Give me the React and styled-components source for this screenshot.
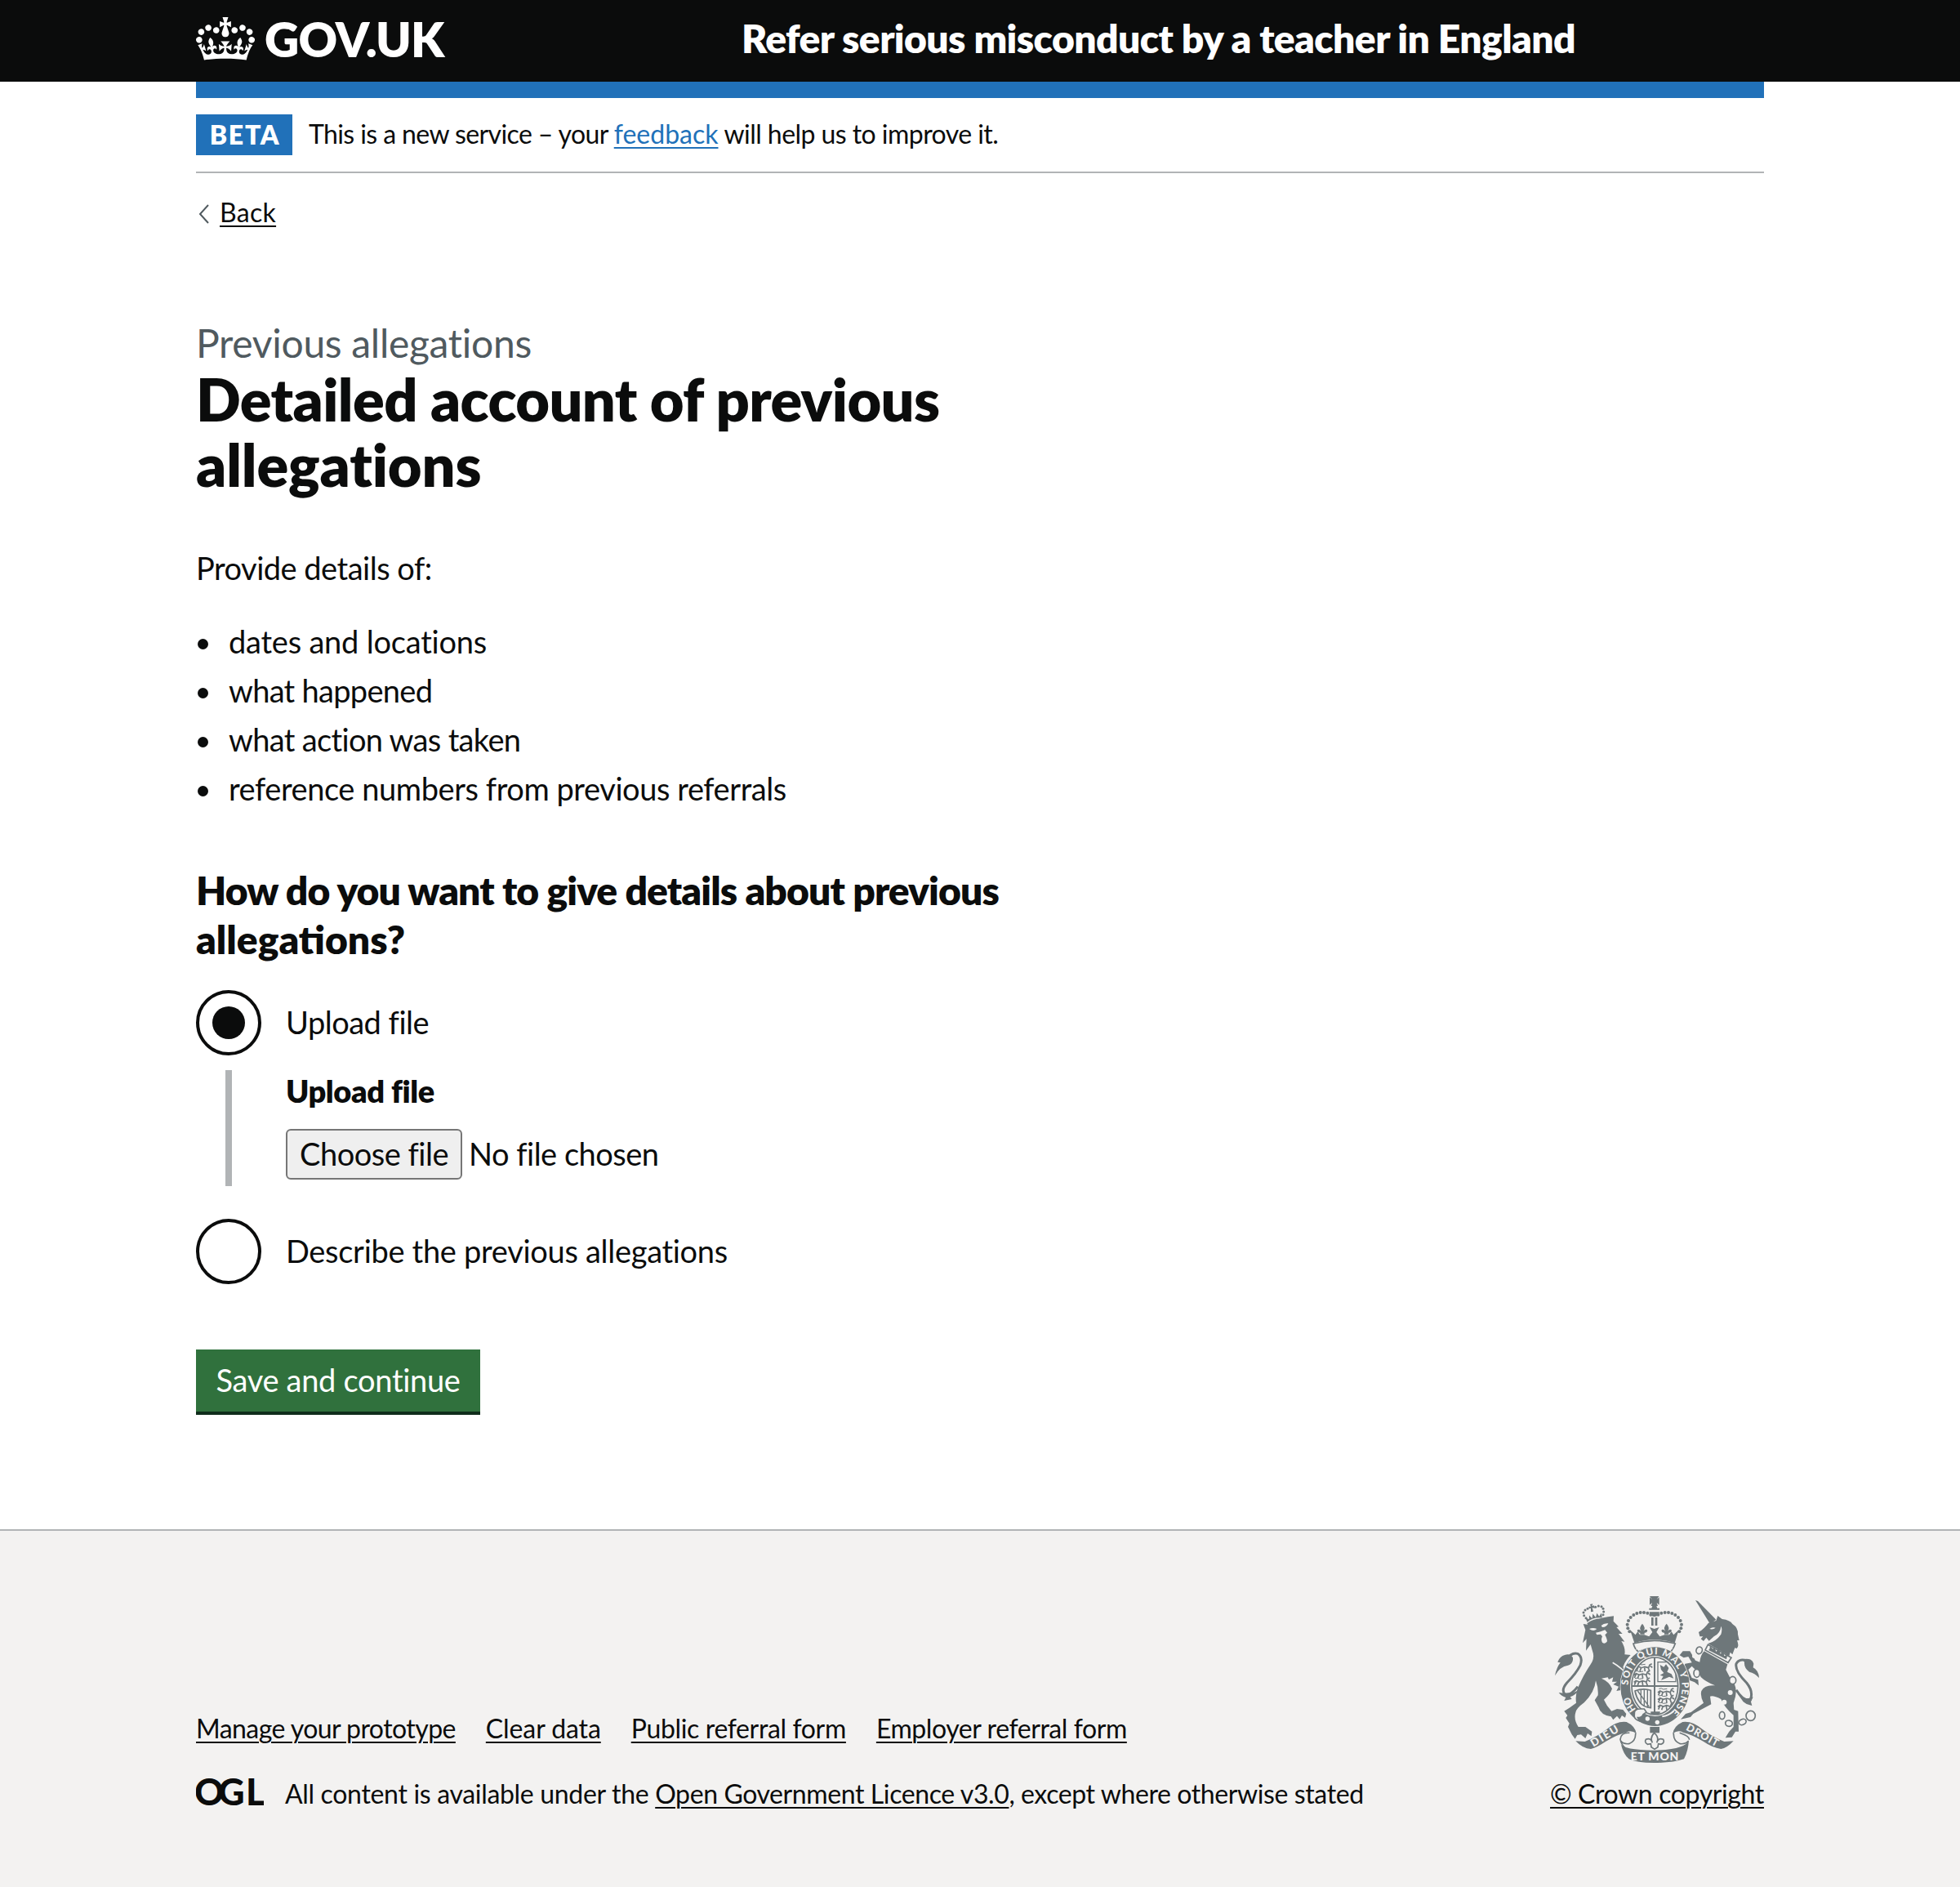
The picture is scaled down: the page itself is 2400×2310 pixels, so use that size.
import React from 'react';
import styled, { createGlobalStyle } from 'styled-components';

const ink = '#0b0c0c';
const blue = '#2171b9';
const grey = '#b1b4b6';
const paper = '#f3f2f1';
const crest = '#6e777a';

const Global = createGlobalStyle`
  *, *::before, *::after { box-sizing: border-box; }
  body {
    margin: 0;
    background: #fff;
    color: ${ink};
    font-family: Lato, "Liberation Sans", sans-serif;
    font-kerning: normal;
  }
`;

const Page = styled.div`
  min-height: 2310px;
  display: flex;
  flex-direction: column;
`;

const Container = styled.div`
  width: 1920px;
  margin: 0 auto;
`;

const Header = styled.header`
  height: 100px;
  background: ${ink};
  color: #fff;
`;

const HeaderRow = styled(Container)`
  height: 100px;
  display: grid;
  grid-template-columns: 668px 1fr;
`;

const LogoLink = styled.a`
  display: flex;
  align-items: flex-start;
  gap: 12px;
  padding-top: 21px;
  color: inherit;
  text-decoration: none;
`;

const Crown = styled.svg`
  width: 72px;
  height: 53px;
  fill: currentColor;
`;

const LogoText = styled.span`
  font-size: 58.5px;
  font-weight: 800;
  line-height: 60px;
  margin-top: -4px;
  letter-spacing: ${p => p.$ls}px;
`;

const ServiceName = styled.span`
  padding-top: 17px;
  font-size: 48px;
  font-weight: 800;
  line-height: 60px;
  white-space: nowrap;
  letter-spacing: ${p => p.$ls}px;
`;

const BlueBar = styled.div`
  height: 20px;
  background: ${blue};
`;

const PhaseBanner = styled.div`
  height: 92px;
  padding-top: 20px;
  display: flex;
  align-items: flex-start;
  gap: 20px;
  border-bottom: 2px solid ${grey};
`;

const Tag = styled.strong`
  width: 118px;
  height: 50px;
  padding-left: 2px;
  background: ${blue};
  color: #fff;
  font-size: 32px;
  font-weight: 800;
  line-height: 49px;
  text-align: center;
  letter-spacing: 1.7px;
`;

const Text = styled.span`
  letter-spacing: ${p => p.$ls || 0}px;
`;

const SmallText = styled.p`
  margin: ${p => p.$top || 0}px 0 0;
  font-size: 32px;
  line-height: 40px;
  white-space: pre;
`;

const Link = styled.a`
  color: ${p => p.$color || ink};
  text-decoration: underline;
  text-decoration-thickness: 2px;
  text-underline-offset: 4px;
  letter-spacing: ${p => p.$ls || 0}px;
`;

const BackRow = styled.div`
  display: flex;
  align-items: center;
  gap: 13px;
  margin-top: 28px;
  padding-left: 3px;
  font-size: 32px;
  line-height: 40px;
`;

const Chevron = styled.svg`
  width: 13px;
  height: 24px;
  margin-top: 3px;
  fill: none;
  stroke: #505a5f;
  stroke-width: 2;
`;

const Main = styled.main`
  width: 1060px;
  padding-top: 110px;
`;

const Caption = styled.span`
  display: block;
  color: #505a5f;
  font-size: 48px;
  line-height: 60px;
  letter-spacing: ${p => p.$ls}px;
`;

const Title = styled.h1`
  margin: -2px 0 62px;
  font-size: 72px;
  font-weight: 800;
  line-height: 80px;
`;

const Line = styled.span`
  display: block;
  white-space: nowrap;
  letter-spacing: ${p => p.$ls}px;
`;

const Body = styled.p`
  margin: 0 0 40px;
  font-size: 38px;
  line-height: 50px;
  letter-spacing: ${p => p.$ls}px;
`;

const List = styled.ul`
  margin: 0 0 70px;
  padding: 0;
  list-style: none;
  display: flex;
  flex-direction: column;
  gap: 10px;
`;

const Item = styled.li`
  display: flex;
  align-items: center;
  gap: 25px;
  padding-left: 2px;
  font-size: 38px;
  line-height: 50px;
  letter-spacing: ${p => p.$ls}px;

  &::before {
    content: "";
    width: 13px;
    height: 13px;
    margin-top: 6px;
    border-radius: 50%;
    background: ${ink};
  }
`;

const Legend = styled.h2`
  margin: 0 0 32px;
  font-size: 48px;
  font-weight: 800;
  line-height: 60px;
`;

const RadioRow = styled.label`
  display: flex;
  align-items: center;
  gap: 30px;
  height: 80px;
  font-size: 38px;
  line-height: 50px;
`;

const RadioRing = styled.span`
  width: 80px;
  height: 80px;
  display: grid;
  place-items: center;
  border: 4px solid ${ink};
  border-radius: 50%;
`;

const RadioDot = styled.span`
  width: 40px;
  height: 40px;
  border-radius: 50%;
  background: ${ink};
`;

const RadioLabel = styled.span`
  margin-top: -2px;
  letter-spacing: ${p => p.$ls}px;
`;

const Conditional = styled.div`
  height: 142px;
  margin: 20px 0 40px 36px;
  padding-left: 66px;
  border-left: 8px solid ${grey};
`;

const FileLabel = styled.div`
  margin-top: -2px;
  font-size: 38px;
  font-weight: 800;
  line-height: 50px;
  letter-spacing: ${p => p.$ls}px;
`;

const FileRow = styled.div`
  display: flex;
  align-items: center;
  gap: 8px;
  margin-top: 22px;
  font-size: 38px;
  line-height: 50px;
`;

const ChooseButton = styled.button`
  width: 216px;
  height: 62px;
  padding: 0 0 2px;
  border: 2px solid #767676;
  border-radius: 6px;
  background: #efefef;
  color: ${ink};
  font: inherit;
  letter-spacing: ${p => p.$ls}px;
  white-space: nowrap;
`;

const NoFile = styled.span`
  margin-top: -2px;
  letter-spacing: ${p => p.$ls}px;
`;

const SaveButton = styled.button`
  display: block;
  width: 348px;
  height: 80px;
  margin-top: 80px;
  padding: 0 0 2px;
  border: 0;
  border-bottom: 4px solid #102d1b;
  background: #30713d;
  color: #fff;
  font: inherit;
  font-size: 38px;
  line-height: 50px;
  letter-spacing: ${p => p.$ls}px;
  white-space: nowrap;
`;

const Footer = styled.footer`
  flex: 1;
  margin-top: 140px;
  border-top: 2px solid ${grey};
  background: ${paper};
`;

const FooterRow = styled(Container)`
  display: flex;
  justify-content: space-between;
  align-items: flex-end;
  padding-top: 80px;
`;

const FooterNav = styled.nav`
  display: flex;
  gap: 37px;
  margin-bottom: 40px;
  font-size: 32px;
  line-height: 40px;
  white-space: nowrap;
`;

const Licence = styled.div`
  display: flex;
  align-items: flex-start;
  gap: 26px;
`;

const OglLogo = styled.svg`
  width: 83px;
  height: 40px;
  fill: ${ink};
  font: 900 45px Lato, sans-serif;
`;

const Copyright = styled.div`
  width: 262px;
  display: flex;
  flex-direction: column;
  align-items: center;
  gap: 18px;
  font-size: 32px;
  line-height: 40px;
  white-space: nowrap;
`;

const Arms = styled.svg`
  width: 250px;
  height: 204px;
  fill: ${crest};
  font-family: Lato, sans-serif;
  font-weight: 900;
`;

const CrownMark = () => (
  <Crown viewBox="0 0 132 97" aria-hidden="true">
    <path
      fillRule="evenodd"
      d="M25 30.2c3.5 1.5 7.7-.2 9.1-3.7 1.5-3.6-.2-7.8-3.9-9.2-3.6-1.4-7.6.3-9.1 3.9-1.4 3.5.3 7.5 3.9 9zM9 39.5c3.6 1.5 7.8-.2 9.2-3.7 1.5-3.6-.2-7.8-3.9-9.1-3.6-1.5-7.6.2-9.1 3.8-1.4 3.5.3 7.5 3.8 9zM4.4 57.2c3.5 1.5 7.7-.2 9.1-3.8 1.5-3.6-.2-7.7-3.9-9.1-3.5-1.5-7.6.3-9.1 3.8-1.4 3.5.3 7.6 3.9 9.1zm38.3-21.4c3.5 1.5 7.7-.2 9.1-3.8 1.5-3.6-.2-7.7-3.9-9.1-3.6-1.5-7.6.3-9.1 3.8-1.3 3.6.4 7.7 3.9 9.1zm64.4-5.6c-3.6 1.5-7.8-.2-9.1-3.7-1.5-3.6.2-7.8 3.8-9.2 3.6-1.4 7.7.3 9.2 3.9 1.3 3.5-.4 7.5-3.9 9zm15.9 9.3c-3.6 1.5-7.7-.2-9.1-3.7-1.5-3.6.2-7.8 3.7-9.1 3.6-1.5 7.7.2 9.2 3.8 1.5 3.5-.3 7.5-3.8 9zm4.7 17.7c-3.6 1.5-7.8-.2-9.2-3.8-1.5-3.6.2-7.7 3.9-9.1 3.6-1.5 7.7.3 9.2 3.8 1.3 3.5-.4 7.6-3.9 9.1zM89.3 35.8c-3.6 1.5-7.8-.2-9.2-3.8-1.4-3.6.2-7.7 3.9-9.1 3.6-1.5 7.7.3 9.2 3.8 1.4 3.6-.3 7.7-3.9 9.1zM69.7 17.7l8.9 4.7V9.3l-8.9 2.8c-.2-.3-.5-.6-.9-.9L72.4 0H59.6l3.5 11.2c-.3.3-.6.5-.9.9l-8.8-2.8v13.1l8.8-4.7c.3.3.6.7.9.9l-5 15.4v.1c-.2.8-.4 1.6-.4 2.4 0 4.1 3.1 7.5 7 8.1h.2c.3 0 .7.1 1 .1.4 0 .7 0 1-.1h.2c4-.6 7.1-4.1 7.1-8.1 0-.8-.1-1.7-.4-2.4V34l-5.1-15.4c.4-.2.7-.6 1-.9zM66 92.8c16.9 0 32.8 1.1 47.1 3.2 4-16.9 8.9-26.7 14-33.5l-9.6-3.4c1 4.9 1.1 7.2 0 10.2-1.5-1.4-3-4.3-4.2-8.7L108.6 76c2.8-2 5-3.2 7.5-3.3-4.4 9.4-10 11.9-13.6 11.2-4.3-.8-6.3-4.6-5.6-7.9 1-4.7 5.7-5.9 8-.5 4.3-8.7-3-11.4-7.6-8.8 7.1-7.2 7.9-13.5 2.1-21.1-8 6.1-8.1 12.3-4.5 20.8-4.7-5.4-12.1-2.5-9.5 6.2 3.4-5.2 7.9-2 7.2 3.1-.6 4.3-6.4 7.8-13.5 7.2-10.3-.9-10.9-8-11.2-13.8 2.5-.5 7.1 1.8 11 7.3L80.2 60c-4.1 4.4-8 5.3-12.3 5.4 1.4-4.4 8-11.6 8-11.6H55.5s6.4 7.2 7.9 11.6c-4.2-.1-8-1-12.3-5.4l1.4 16.4c3.9-5.5 8.5-7.7 10.9-7.3-.3 5.8-.9 12.8-11.1 13.8-7.2.6-12.9-2.9-13.5-7.2-.7-5 3.8-8.3 7.1-3.1 2.7-8.7-4.6-11.6-9.4-6.2 3.7-8.5 3.6-14.7-4.6-20.8-5.8 7.6-5 13.9 2.2 21.1-4.7-2.6-11.9.1-7.7 8.8 2.3-5.5 7.1-4.2 8.1.5.7 3.3-1.3 7.1-5.7 7.9-3.5.7-9-1.8-13.5-11.2 2.5.1 4.7 1.3 7.5 3.3l-4.7-15.4c-1.2 4.4-2.7 7.2-4.3 8.7-1.1-3-.9-5.3 0-10.2l-9.5 3.4c5 6.9 9.9 16.7 14 33.5 14.8-2.1 30.8-3.2 47.7-3.2z"
    />
  </Crown>
);

// Beads of the imperial crown's left arch; the right arch mirrors them.
const beads = [[424, 116], [412, 110], [399, 108], [386, 108], [373, 111], [361, 117], [350, 126], [342, 138], [338, 152], [340, 166], [346, 178]];
const lionBeads = [[186, 128], [179, 119], [177, 108], [183, 99], [192, 94], [221, 88], [232, 84], [243, 86], [249, 94], [251, 105], [249, 116]];
const links = [[602, 247, 11, 13, 20], [593, 331, 11, 15, 0], [725, 357, 12, 14, 0], [686, 486, 10, 14, 0], [711, 515, 13, 11, 10], [761, 510, 14, 10, -25], [791, 487, 17, 18, 0]];

const Fleur = ({ x, y }) => (
  <path transform={`translate(${x} ${y})`} d="M0-21Q14-6 4 6Q14-4 19 4Q17 14 8 12L8 18H-8V12Q-17 14-19 4Q-14-4-4 6Q-14-6 0-21Z" />
);

// Three passant lions, as in the first and fourth quarters of the shield.
const Passant = ({ x, y }) => (
  <g transform={`translate(${x} ${y})`} fill="none" stroke={crest} strokeWidth="5">
    <path d="M0 8L8 2L20 7L32 3L46 7L50-4L58-8M8 4L2 18M18 8L14 20M31 6L33 20M45 8L50 20M52 0L60 6" />
    <path strokeWidth="3" d="M4-6Q14-10 20-4L34-6" />
  </g>
);

const RoyalArms = () => (
  <Arms viewBox="72 48 750 612" aria-hidden="true">
    <defs>
      <path id="garter" d="M440 498A99 118 0 0 1 440 262A99 118 0 0 1 440 498" />
      <clipPath id="shield"><ellipse cx="439" cy="378" rx="84" ry="104" /></clipPath>
    </defs>

    {/* lion */}
    <path d="M176 150L192 152Q228 130 266 124L288 121L287 140L306 160L298 162L320 186L306 186L328 215L316 213Q332 238 328 262L350 264Q330 285 322 308L335 335Q350 365 345 395L340 405L330 398L316 410L318 392L298 396L306 380L286 372L300 362L282 362L286 346L270 354L266 346L243 350Q272 362 282 388Q276 408 252 428Q262 452 280 470L300 462L322 465L334 480L330 494L318 486L310 500L300 488L286 502L278 490Q240 484 232 455L218 430L230 412Q232 385 222 358Q218 400 180 438Q150 460 148 475Q140 500 158 528L184 528L208 545L206 562L192 552L184 570L168 556L154 558L146 572L134 556L120 528L125 515L112 495L118 486L106 470L125 458L150 440Q146 410 156 385Q178 335 202 300Q220 275 210 250L203 225L186 248L188 205L174 220L184 172Z" />
    <g fill={paper}>
      <path d="M198 168Q212 162 226 168Q214 180 198 168ZM242 156Q252 146 268 148Q262 162 246 162Z" />
      <path d="M222 182L240 178L256 172L264 182L256 190Q264 206 264 214Q256 226 246 218Q240 208 246 196L240 188L226 190Z" />
    </g>
    <path d="M284 292Q312 308 350 346" fill="none" stroke={paper} strokeWidth="5" />
    <g transform="rotate(-16 215 130)">
      <path d="M186 140Q215 128 247 140L246 150Q215 140 188 150Z" />
      <path d="M188 136L186 118L197 128L202 114L209 128L216 112L223 128L231 114L236 128L247 118L245 136Q215 124 188 136Z" />
    </g>
    {lionBeads.map(([x, y]) => <circle key={`${x}-${y}`} cx={x} cy={y} r="4.5" />)}
    <path d="M201 78L211 76L208 84L216 82L218 92L209 90L213 104L204 106L204 92L197 94L196 86L204 86Z" />
    <path d="M112 284Q132 253 155 259Q176 272 165 302Q150 332 116 366Q94 392 108 408Q128 416 156 380" fill="none" stroke={crest} strokeWidth="9" />
    <path d="M72 340Q78 310 92 292L82 290Q90 268 108 264Q128 256 138 274Q140 296 120 302Q90 306 72 340Z" />
    <path d="M86 402L104 404L140 402L158 394Q148 412 128 418L134 426L106 432L112 420Q96 416 86 402Z" />

    {/* unicorn */}
    <path d="M588 63L597 66L664 134L642 150Z" />
    <path d="M600 180Q620 168 636 146L664 138L670 120L686 132Q716 136 724 150Q746 164 744 188L749 210L741 211Q750 232 740 240L733 238L724 262L716 254L712 268L634 222Q664 214 682 188Q688 168 682 158Q680 184 656 196L638 212L628 200L618 213L608 205L616 196L604 196Z" />
    <path d="M640 168Q650 160 662 164Q652 172 640 168Z" fill={paper} />
    <path d="M634 226L720 274L708 292L624 246Z" fill={paper} stroke={crest} strokeWidth="5" />
    <path d="M640 242L642 230L652 242L658 234L664 252L674 240L680 260L690 250L694 268L706 262L702 280L636 246Z" />
    <path d="M620 250L706 298L700 318Q712 345 732 372Q744 400 728 440L730 465L745 470L747 545L735 545L722 566L698 568L712 545L728 528L728 485Q694 456 682 426Q655 412 642 416L646 445L580 480L570 492L534 500L552 480L572 474L618 440Q605 415 610 396Q622 372 660 376Q625 362 608 345L600 330L575 305L562 318L575 348L598 355L600 376L585 364L565 356L555 325L543 315L550 296L575 292L562 270L545 274L530 265L542 250L568 250L588 284L604 290Q606 266 620 250Z" />
    {links.map(([x, y, rx, ry, a]) => (
      <ellipse key={`${x}-${y}`} cx={x} cy={y} rx={rx} ry={ry} transform={`rotate(${a} ${x} ${y})`} fill={paper} stroke={crest} strokeWidth="5" />
    ))}
    <g fill={paper}><circle cx="716" cy="402" r="9" /><circle cx="694" cy="437" r="9" /><circle cx="584" cy="268" r="8" /></g>
    <path d="M738 392Q764 434 790 428Q802 398 776 366Q732 322 738 296Q748 276 776 284" fill="none" stroke={crest} strokeWidth="9" />
    <path d="M760 280Q796 272 802 296L800 310Q820 320 822 348Q806 330 786 326Q766 312 768 290Z" />
    <path d="M744 408Q764 428 788 422L800 418L792 436L796 450L776 444L764 436Z" />

    {/* crown */}
    <path d="M420 48H454L446 60L455 52V80L446 72L450 84H425L429 72L420 80V52L429 60Z" />
    <path d="M430 84H445L448 92H456V98H418V92H427Z" />
    <path d="M419 106H456Q454 122 437 124Q421 122 419 106Z" />
    <path d="M426 126H434V156H426ZM440 126H448V156H440Z" />
    {beads.map(([x, y]) => (
      <g key={x}><circle cx={x} cy={y} r="6" /><circle cx={875 - x} cy={y} r="6" /></g>
    ))}
    <path d="M348 172L368 190L376 178L384 190H400L418 196L430 180L420 162L437 168L455 162L445 180L457 196L475 190H492L500 178L508 190L527 172L512 220Q437 196 364 220Z" />
    <Fleur x={393} y={170} />
    <Fleur x={482} y={170} />
    <path d="M360 222Q437 200 514 222Q510 236 498 252Q437 226 378 252Q364 240 360 222Z" fill={paper} stroke={crest} strokeWidth="5" />

    {/* garter and shield */}
    <ellipse cx="440" cy="380" rx="129" ry="147" fill={paper} />
    <path fillRule="evenodd" d="M313 380A127 145 0 1 1 567 380A127 145 0 1 1 313 380ZM348 378A91 111 0 1 0 530 378A91 111 0 1 0 348 378Z" />
    <path d="M372 240Q437 222 502 240L508 244Q437 216 366 246Z" fill={paper} />
    <g fill={paper} fontSize="35">
      <text><textPath href="#garter" startOffset="80" textLength="54">HO</textPath></text>
      <text><textPath href="#garter" startOffset="176" textLength="440">SOIT QUI MAL Y PENSE</textPath></text>
    </g>
    <ellipse cx="439" cy="378" rx="85" ry="105" fill={paper} stroke={crest} strokeWidth="5" />
    <g clipPath="url(#shield)">
      <Passant x={370} y={304} />
      <Passant x={362} y={330} />
      <Passant x={362} y={356} />
      <Passant x={450} y={394} />
      <Passant x={450} y={420} />
      <Passant x={450} y={446} />
      <path d="M450 290H500L516 330V362H450Z" fill="none" stroke={crest} strokeWidth="4" />
      <path d="M458 300L472 308L480 298L490 312L484 326L500 334L508 350L492 344L478 350L462 356L470 342L458 338L472 330L462 318Z" />
      <path d="M366 396Q396 384 424 394V458Q398 456 384 438Q370 418 366 396Z" fill="none" stroke={crest} strokeWidth="5" />
      <path d="M376 396L418 454M388 392V442M400 391V452M412 391V456" fill="none" stroke={crest} strokeWidth="4" />
      <path d="M350 378H530M438 270V486" fill="none" stroke={crest} strokeWidth="6" />
      <path d="M424 472H458V490H424Z" />
    </g>
    <path d="M466 490Q490 486 508 470" fill="none" stroke={paper} strokeWidth="6" />
    <g fill={paper}><circle cx="412" cy="498" r="8" /><circle cx="448" cy="511" r="8" /></g>
    <path d="M386 462Q362 462 364 480Q360 500 382 506L376 494Q392 494 396 482L408 474L400 462Z" fill={paper} stroke={crest} strokeWidth="5" />

    {/* pendant */}
    <path d="M421 528H456V550H421Z" />
    <path d="M437 550Q420 566 430 586Q424 566 406 574Q400 586 412 592L424 590L426 602L438 610L450 602L452 590L462 592Q476 586 470 574Q452 566 446 586Q456 566 437 550Z" fill={paper} stroke={crest} strokeWidth="5" />

    {/* scroll */}
    <path d="M346 550Q314 548 312 574Q316 592 330 606M566 575Q566 562 530 550" fill="none" stroke={crest} strokeWidth="5" />
    <path d="M368 550Q370 580 344 590Q322 592 314 580M508 550Q506 580 532 590Q554 592 562 580" fill="none" stroke={crest} strokeWidth="5" />
    <path d="M148 580L182 582Q230 562 262 537Q300 505 335 510Q366 524 371 552Q352 538 334 548Q300 556 258 582Q226 604 204 609Q174 608 148 580Z" />
    <path d="M728 580L694 582Q646 562 614 537Q576 505 541 510Q510 524 505 552Q524 538 542 548Q576 556 618 582Q650 604 682 609Q704 606 728 580Z" />
    <path d="M314 590Q322 612 437 614Q552 612 564 576Q562 616 546 646Q506 660 437 660Q370 660 344 646Q324 630 314 590Z" />
    <g fill={paper}>
      <text fontSize="40" textLength="112" transform="translate(213 602) rotate(-31)">DIEU</text>
      <text fontSize="38" textLength="130" transform="translate(551 538) rotate(29)">DROIT</text>
      <text fontSize="42" x="350" y="650" textLength="176">ET MON</text>
    </g>
  </Arms>
);

const items = [
  ['dates and locations', -0.21],
  ['what happened', -0.7],
  ['what action was taken', -0.66],
  ['reference numbers from previous referrals', -0.43],
];

const footerLinks = [
  ['Manage your prototype', -0.56],
  ['Clear data', -0.1],
  ['Public referral form', -0.36],
  ['Employer referral form', -0.43],
];

export default function App() {
  return (
    <Page>
      <Global />
      <Header>
        <HeaderRow>
          <LogoLink>
            <CrownMark />
            <LogoText $ls={-0.8}>GOV.UK</LogoText>
          </LogoLink>
          <ServiceName $ls={-0.6}>Refer serious misconduct by a teacher in England</ServiceName>
        </HeaderRow>
      </Header>
      <Container>
        <BlueBar />
        <PhaseBanner>
          <Tag>BETA</Tag>
          <SmallText $top={4}>
            <Text $ls={-0.6}>This is a new service – your </Text>
            <Link $color={blue} $ls={0}>feedback</Link>
            <Text $ls={-0.55}> will help us to improve it.</Text>
          </SmallText>
        </PhaseBanner>
        <BackRow>
          <Chevron viewBox="0 0 13 24"><path d="M12 1L2 12L12 23" /></Chevron>
          <Link $ls={0.3}>Back</Link>
        </BackRow>
        <Main>
          <Caption $ls={-0.3}>Previous allegations</Caption>
          <Title>
            <Line $ls={-0.6}>Detailed account of previous</Line>
            <Line $ls={-0.1}>allegations</Line>
          </Title>
          <Body $ls={-0.5}>Provide details of:</Body>
          <List>
            {items.map(([text, ls]) => <Item key={text} $ls={ls}>{text}</Item>)}
          </List>
          <Legend>
            <Line $ls={-0.9}>How do you want to give details about previous</Line>
            <Line $ls={0}>allegations?</Line>
          </Legend>
          <RadioRow>
            <RadioRing><RadioDot /></RadioRing>
            <RadioLabel $ls={-0.5}>Upload file</RadioLabel>
          </RadioRow>
          <Conditional>
            <FileLabel $ls={-0.4}>Upload file</FileLabel>
            <FileRow>
              <ChooseButton $ls={-0.5}>Choose file</ChooseButton>
              <NoFile $ls={-0.5}>No file chosen</NoFile>
            </FileRow>
          </Conditional>
          <RadioRow>
            <RadioRing />
            <RadioLabel $ls={-0.3}>Describe the previous allegations</RadioLabel>
          </RadioRow>
          <SaveButton $ls={-0.3}>Save and continue</SaveButton>
        </Main>
      </Container>
      <Footer>
        <FooterRow>
          <div>
            <FooterNav>
              {footerLinks.map(([text, ls]) => <Link key={text} $ls={ls}>{text}</Link>)}
            </FooterNav>
            <Licence>
              <OglLogo viewBox="0 0 83 40">
                <text x="-2 27 61" y="34">OGL</text>
              </OglLogo>
              <SmallText>
                <Text $ls={-0.32}>All content is available under the </Text>
                <Link $ls={-0.4}>Open Government Licence v3.0</Link>
                <Text $ls={-0.4}>, except where otherwise stated</Text>
              </SmallText>
            </Licence>
          </div>
          <Copyright>
            <RoyalArms />
            <Link $ls={-0.38}>© Crown copyright</Link>
          </Copyright>
        </FooterRow>
      </Footer>
    </Page>
  );
}
